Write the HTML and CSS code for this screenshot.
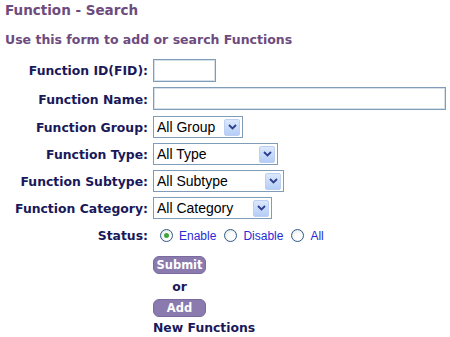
FILE: index.html
```html
<!DOCTYPE html>
<html lang="en">
<head>
    <meta charset="UTF-8">
    <title>Function - Search</title>
    <link rel="stylesheet" href="styles.css">
</head>
<body>
    <h1 class="title">Function - Search</h1>
    <p class="intro">Use this form to add or search Functions</p>

    <form class="search">
        <label class="lbl" for="fid">Function ID(FID):</label>
        <div><input class="txt txt_fid" id="fid" type="text"></div>

        <label class="lbl" for="fname">Function Name:</label>
        <div><input class="txt txt_name" id="fname" type="text"></div>

        <label class="lbl">Function Group:</label>
        <div><span class="sel w_group"><span class="sel_text">All Group</span><span class="sel_btn"><svg width="9" height="6" viewBox="0 0 9 6"><path d="M1 1 L4.5 4.5 L8 1" fill="none" stroke="#2b3f8c" stroke-width="1.8"/></svg></span></span></div>

        <label class="lbl">Function Type:</label>
        <div><span class="sel w_type"><span class="sel_text">All Type</span><span class="sel_btn"><svg width="9" height="6" viewBox="0 0 9 6"><path d="M1 1 L4.5 4.5 L8 1" fill="none" stroke="#2b3f8c" stroke-width="1.8"/></svg></span></span></div>

        <label class="lbl">Function Subtype:</label>
        <div><span class="sel w_sub"><span class="sel_text">All Subtype</span><span class="sel_btn"><svg width="9" height="6" viewBox="0 0 9 6"><path d="M1 1 L4.5 4.5 L8 1" fill="none" stroke="#2b3f8c" stroke-width="1.8"/></svg></span></span></div>

        <label class="lbl">Function Category:</label>
        <div><span class="sel w_cat"><span class="sel_text">All Category</span><span class="sel_btn"><svg width="9" height="6" viewBox="0 0 9 6"><path d="M1 1 L4.5 4.5 L8 1" fill="none" stroke="#2b3f8c" stroke-width="1.8"/></svg></span></span></div>

        <label class="lbl">Status:</label>
        <div class="radios">
            <span class="radio on"></span><span class="rtxt">Enable</span>
            <span class="radio"></span><span class="rtxt">Disable</span>
            <span class="radio"></span><span class="rtxt">All</span>
        </div>

        <div></div>
        <div class="actions">
            <span class="btn">Submit</span>
            <span class="or">or</span>
            <span class="btn">Add</span>
            <span class="newf">New Functions</span>
        </div>
    </form>
</body>
</html>
```

FILE: styles.css
```css
*{
    margin: 0;
    padding: 0;
    box-sizing: border-box;
}
body{
    background: #fff;
    font-family: "DejaVu Sans", Verdana, sans-serif;
    padding: 2px 5px 0 5px;
}
.title{
    font-size: 13.5px;
    font-weight: bold;
    color: #6e4b7e;
    line-height: 16px;
}
.intro{
    font-size: 12.5px;
    font-weight: bold;
    color: #6e4b7e;
    line-height: 16px;
    margin-top: 14px;
}
.search{
    display: grid;
    grid-template-columns: 143px auto;
    column-gap: 5px;
    row-gap: 5px;
    margin-top: 11px;
    align-items: center;
}
.lbl{
    font-size: 12.4px;
    font-weight: bold;
    color: #19195a;
    text-align: right;
    white-space: nowrap;
}
.txt{
    display: block;
    height: 23px;
    border: 1px solid #7f9db9;
    box-shadow: inset 0 0 0 1px #d6e0ea;
    background: #fff;
}
.txt_fid{ width: 63px; }
.txt_name{ width: 293px; margin-bottom: 1px; }
.sel{
    display: flex;
    align-items: center;
    height: 22px;
    border: 1px solid #7f9db9;
    padding: 0 2px 0 3px;
    background: #fff;
}
.w_group{ width: 90px; }
.w_type{ width: 125px; }
.w_sub{ width: 131px; }
.w_cat{ width: 119px; }
.sel_text{
    flex: 1;
    font-family: "Liberation Sans", Arial, sans-serif;
    font-size: 14px;
    color: #000;
}
.sel_btn{
    width: 16px;
    height: 17px;
    display: flex;
    align-items: center;
    justify-content: center;
    border: 1px solid #bcd0f4;
    border-radius: 2px;
    background: linear-gradient(#dce8fc, #b5cdf6);
}
.radios{
    display: flex;
    align-items: center;
    height: 23px;
}
.radio{
    width: 13px;
    height: 13px;
    border: 1px solid #2f5a8b;
    border-radius: 50%;
    background: radial-gradient(circle at 60% 60%, #fff 30%, #dcdcd6 100%);
    margin: 0 6px 0 7px;
    position: relative;
}
.radio.on{
    margin-left: 7px;
}
.radio.on::after{
    content: "";
    position: absolute;
    left: 3px;
    top: 3px;
    width: 5px;
    height: 5px;
    border-radius: 50%;
    background: #3fa63f;
}
.rtxt{
    font-family: "Liberation Sans", Arial, sans-serif;
    font-size: 12px;
    color: #2a2ad6;
    margin-right: 1px;
}
.actions{
    display: flex;
    flex-direction: column;
    align-items: flex-start;
    margin-top: 4px;
}
.btn{
    display: block;
    width: 53px;
    height: 18px;
    line-height: 16px;
    border-radius: 6px;
    background: #8a7aad;
    border: 1px solid #7b6aa0;
    color: #fff;
    font-size: 11.5px;
    font-weight: bold;
    text-align: center;
}
.or{
    width: 53px;
    text-align: center;
    font-size: 12.4px;
    font-weight: bold;
    color: #19195a;
    line-height: 25px;
}
.newf{
    font-size: 12.4px;
    font-weight: bold;
    color: #19195a;
    line-height: 22px;
}
```
